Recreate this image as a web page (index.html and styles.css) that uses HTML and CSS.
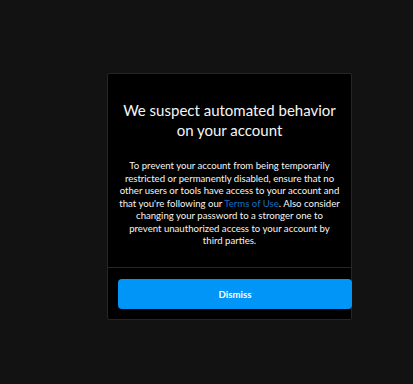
FILE: index.html
```html
<!DOCTYPE html>
<html lang="en">

<head>
    <meta charset="UTF-8">
    <meta name="viewport" content="width=device-width, initial-scale=1.0">
    <title>Suspicious activity</title>
    <link rel="stylesheet" href="styles.css">
</head>

<body>
    <!-- Warning dialog -->
    <div class="dialog">
        <div class="dialog-body">
            <h2 class="title">We suspect automated behavior on your account</h2>
            <p class="message">
                To prevent your account from being temporarily<br>
                restricted or permanently disabled, ensure that no<br>
                other users or tools have access to your account and<br>
                that you're following our <a href="#" class="link">Terms of Use</a>. Also consider<br>
                changing your password to a stronger one to<br>
                prevent unauthorized access to your account by<br>
                third parties.
            </p>
        </div>
        <div class="dialog-footer">
            <button class="dismiss-button">Dismiss</button>
        </div>
    </div>
</body>

</html>
```

FILE: styles.css
```css
body {
    margin: 0;
    padding: 73px 0 0 107px;
    background-color: #121212;
    font-family: Lato, "Open Sans", sans-serif;
    color: #f5f5f5;
}

.dialog {
    box-sizing: border-box;
    width: 245px;
    height: 247px;
    background-color: #000;
    border: 1px solid #262626;
    border-radius: 2px;
}

.dialog-body {
    box-sizing: border-box;
    height: 194px;
    padding: 26px 8px 0;
    text-align: center;
    border-bottom: 1px solid #262626;
}

.title {
    margin: 0 0 20px;
    font-size: 15px;
    font-weight: 400;
    line-height: 20px;
}

.message {
    margin: 0;
    font-size: 9.6px;
    line-height: 12.5px;
}

.link {
    color: #1a6fc1;
    text-decoration: none;
}

.dialog-footer {
    padding: 11px 0 0 10px;
}

.dismiss-button {
    display: block;
    width: 234px;
    height: 30px;
    border: none;
    border-radius: 4px;
    background-color: #0095f6;
    color: #fff;
    font-family: inherit;
    font-size: 9.6px;
    font-weight: 700;
    cursor: pointer;
}
```
